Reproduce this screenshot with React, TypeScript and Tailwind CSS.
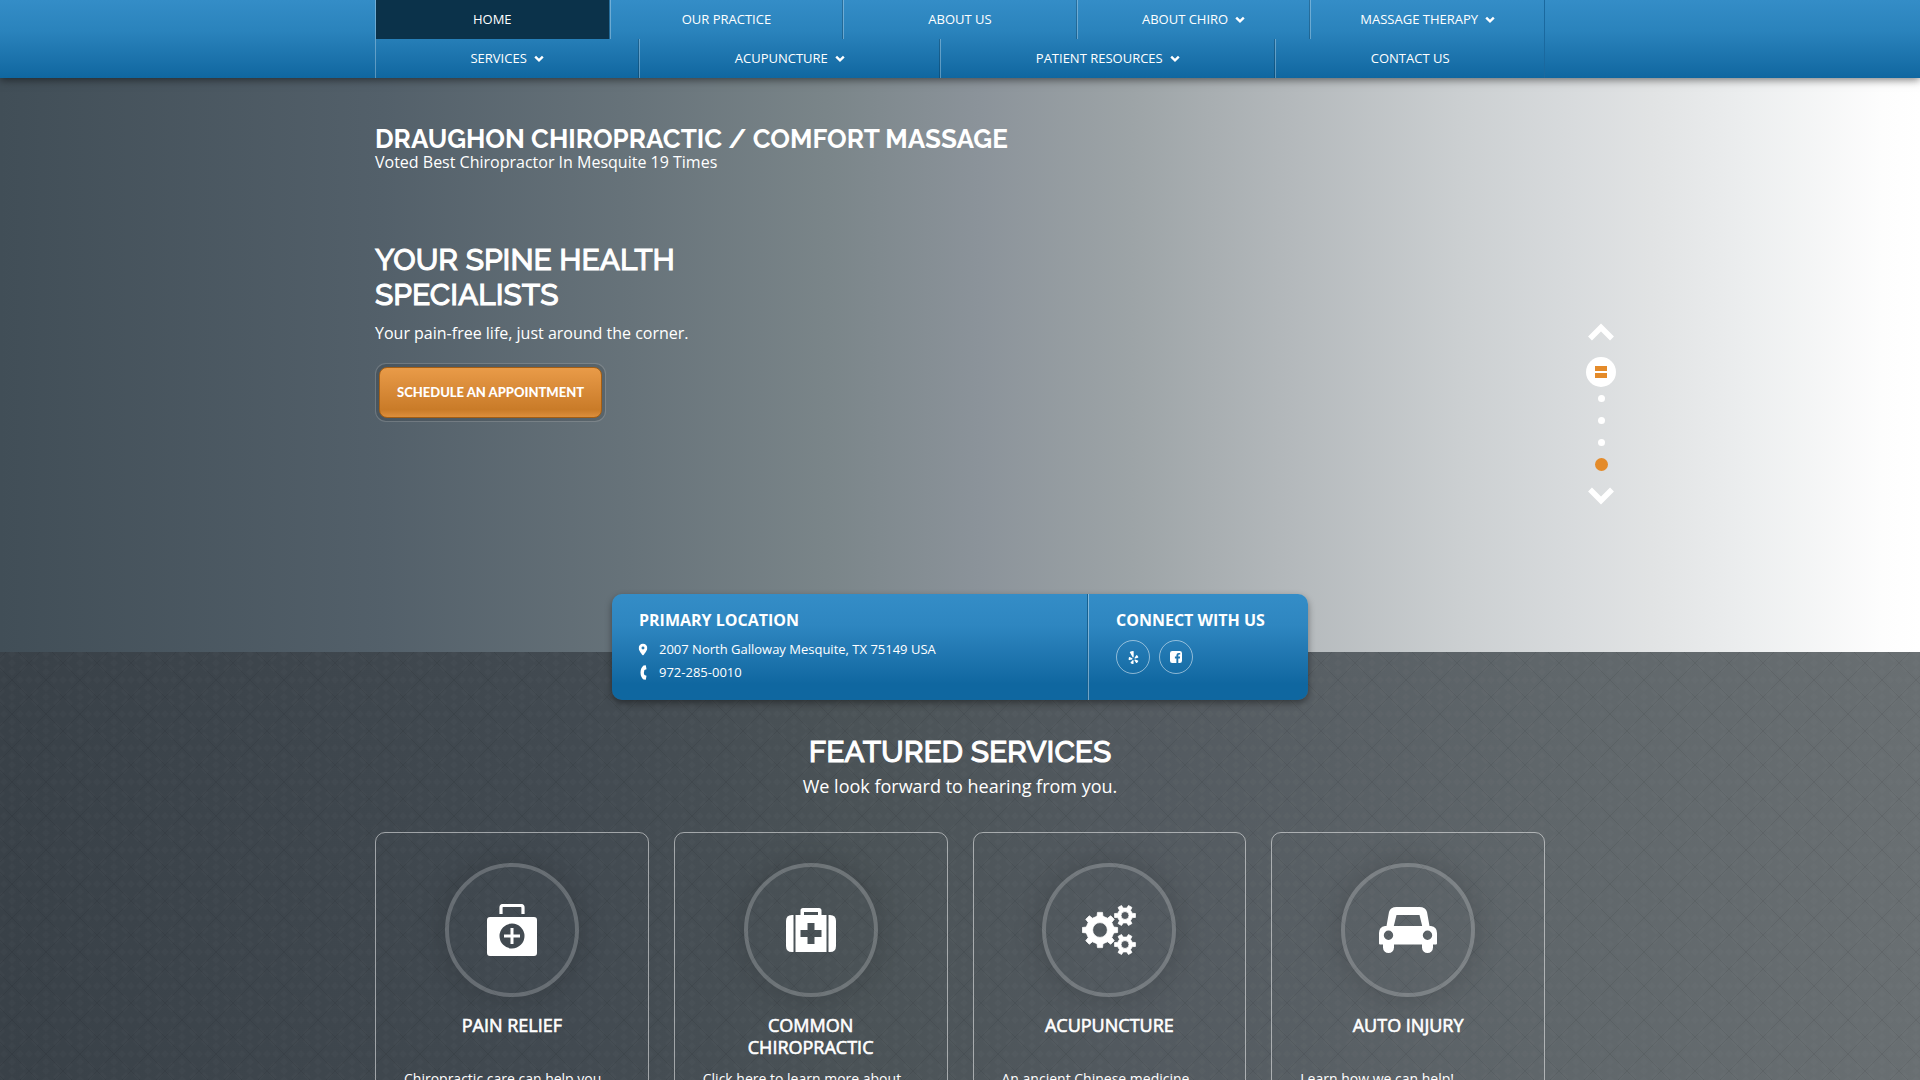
import React from "react";
import { FaLocationDot, FaYelp } from "react-icons/fa6";

const NAV = [
  { label: "HOME", wide: true, active: true },
  { label: "OUR PRACTICE", wide: true },
  { label: "ABOUT US", wide: true },
  { label: "ABOUT CHIRO", wide: true, menu: true },
  { label: "MASSAGE THERAPY", wide: true, menu: true },
  { label: "SERVICES", menu: true },
  { label: "ACUPUNCTURE", menu: true },
  { label: "PATIENT RESOURCES", menu: true },
  { label: "CONTACT US" },
];

function Caret() {
  return (
    <svg viewBox="0 0 10 8" className="ml-[7px] h-2 w-2.5" aria-hidden="true">
      <path d="M1.2 1.6 L5 5.4 L8.8 1.6" fill="none" stroke="white" strokeWidth="2.4" />
    </svg>
  );
}

function Handset() {
  return (
    <svg viewBox="0 0 8 15" className="h-[15px] w-2" aria-hidden="true">
      <path
        d="M4.500 0.500 L6.800 0.300 L7.500 4.200 L5.400 4.900 Q4.400 7.500 5.400 10.100 L7.500 10.800 L6.800 14.700 L4.500 14.500 Q1.500 12 1.500 7.500 Q1.500 3 4.500 0.500 Z"
        fill="white"
      />
    </svg>
  );
}

function FacebookSquare() {
  return (
    <svg viewBox="0 0 12 12" className="h-3 w-3" aria-hidden="true">
      <path
        d="M2.200 0 H9.800 Q12 0 12 2.200 V9.800 Q12 12 9.800 12 H8.300 V7.400 H9.900 L10.100 5.600 H8.300 V4.500 Q8.300 3.600 9.200 3.600 H10.200 V2 Q9.700 1.900 8.800 1.900 Q6.400 1.900 6.400 4.200 V5.600 H4.900 V7.400 H6.400 V12 H2.200 Q0 12 0 9.800 V2.200 Q0 0 2.200 0 Z"
        fill="white"
      />
    </svg>
  );
}

function MedicalBag() {
  return (
    <svg viewBox="0 0 50 52" className="h-[52px] w-[50px]" aria-hidden="true">
      <path d="M14 10 V3.5 Q14 1.5 16 1.5 H34 Q36 1.5 36 3.5 V10" fill="none" stroke="white" strokeWidth="3.2" />
      <path
        fillRule="evenodd"
        fill="white"
        d="M3 13 H47 Q50 13 50 16 V49 Q50 52 47 52 H3 Q0 52 0 49 V16 Q0 13 3 13 Z M25 19.5 A12.5 12.5 0 1 0 25 44.500 A12.5 12.5 0 1 0 25 19.500 Z"
      />
      <path d="M25 24 V40 M17 32 H33" stroke="white" strokeWidth="3" />
    </svg>
  );
}

function Medkit() {
  return (
    <svg viewBox="0 0 50 44" className="h-11 w-[50px]" aria-hidden="true">
      <path
        fillRule="evenodd"
        fill="white"
        d="M14.500 7 V2.500 Q14.500 0 17 0 H33 Q35.500 0 35.500 2.500 V7 H40.500 V44 H9.500 V7 Z M18 4 V7 H32 V4 Z M21.500 15 V22 H14.500 V29 H21.500 V36 H28.500 V29 H35.500 V22 H28.500 V15 Z"
      />
      <path d="M7.500 7 V44 H6 Q0 44 0 38 V13 Q0 7 6 7 Z M42.500 7 V44 H44 Q50 44 50 38 V13 Q50 7 44 7 Z" fill="white" />
    </svg>
  );
}

function gear(cx: number, cy: number, outer: number, inner: number, hole: number, teeth: number, turn: number) {
  const step = (Math.PI * 2) / teeth;
  const pts: string[] = [];
  for (let i = 0; i < teeth; i++) {
    const a = turn + i * step;
    [
      [inner, -0.27],
      [outer, -0.18],
      [outer, 0.18],
      [inner, 0.27],
    ].forEach(([r, f]) => {
      pts.push(`${(cx + r * Math.cos(a + f * step)).toFixed(2)} ${(cy + r * Math.sin(a + f * step)).toFixed(2)}`);
    });
  }
  return `M${pts.join("L")}Z M${cx - hole} ${cy}a${hole} ${hole} 0 1 0 ${hole * 2} 0a${hole} ${hole} 0 1 0 ${-hole * 2} 0Z`;
}

function Gears() {
  return (
    <svg viewBox="0 0 54 50" className="h-[50px] w-[54px]" aria-hidden="true">
      <g fill="white" fillRule="evenodd" stroke="white" strokeWidth="0.8" strokeLinejoin="round">
        <path d={gear(18, 25, 17.800, 14, 7.400, 8, 0)} />
        <path d={gear(43, 10.500, 10.600, 7.600, 4, 6, 0)} />
        <path d={gear(43, 39.500, 10.600, 7.600, 4, 6, 0)} />
      </g>
    </svg>
  );
}

function Car() {
  return (
    <svg viewBox="0 0 58 46" className="h-[46px] w-[58px]" aria-hidden="true">
      <path
        fillRule="evenodd"
        fill="white"
        d="M17.500 0 H40.500 Q46.500 0 48 5 L50.500 19 H52 Q58 20 58 26 V36.500 Q58 37.500 57 37.500 H54 V40.500 A5.500 5.500 0 0 1 43 40.500 V37.500 H15 V40.500 A5.500 5.500 0 0 1 4 40.500 V37.500 H1 Q0 37.500 0 36.500 V26 Q0 20 6 19 H7.500 L10 5 Q11.500 0 17.500 0 Z M17.500 8 L14.800 19 H43.200 L40.500 8 Z M9.500 23.500 A4.700 4.700 0 1 0 9.500 32.900 A4.700 4.700 0 1 0 9.500 23.500 Z M48.500 23.500 A4.700 4.700 0 1 0 48.500 32.900 A4.700 4.700 0 1 0 48.500 23.500 Z"
      />
    </svg>
  );
}

const SERVICES = [
  { title: "PAIN RELIEF", text: "Chiropractic care can help you", icon: <MedicalBag /> },
  { title: "COMMON CHIROPRACTIC", text: "Click here to learn more about", icon: <Medkit /> },
  { title: "ACUPUNCTURE", text: "An ancient Chinese medicine", icon: <Gears /> },
  { title: "AUTO INJURY", text: "Learn how we can help!", icon: <Car /> },
];

function Texture() {
  return (
    <svg className="absolute inset-0 h-full w-full" aria-hidden="true">
      <defs>
        <pattern id="weave" width="34" height="34" patternUnits="userSpaceOnUse" patternTransform="translate(-5 11)">
          <path d="M0 0 L34 34 M34 0 L0 34" stroke="black" strokeOpacity="0.07" />
          <g fill="white" fillOpacity="0.016">
            <path d="M17 5 l4 4 -4 4 -4 -4z M17 21 l4 4 -4 4 -4 -4z M5 17 l4 -4 4 4 -4 4z M21 17 l4 -4 4 4 -4 4z" />
            <path d="M5 1 l5 5 -3 3 -5 -5z M29 1 l-5 5 3 3 5 -5z M5 33 l5 -5 -3 -3 -5 5z M29 33 l-5 -5 3 -3 5 5z" />
            <path d="M0 13 l4 4 -4 4z M34 13 l-4 4 4 4z M13 0 l4 4 4 -4z M13 34 l4 -4 4 4z" />
          </g>
        </pattern>
      </defs>
      <rect width="100%" height="100%" fill="url(#weave)" />
    </svg>
  );
}

export default function App() {
  return (
    <div className="h-screen overflow-hidden bg-[#434c53] font-['Open_Sans',sans-serif] text-white">
      <header className="relative z-10 bg-linear-to-b from-[#348dc7] via-[#2a83bc] via-40% to-[#0f67a0] shadow-[0_2px_8px_rgba(0,0,0,0.5)]">
        <nav className="mx-auto max-w-[1170px] border-r border-l border-r-[#1a699f] border-l-white/30">
          <ul className="flex flex-wrap">
            {NAV.map((item, i) => (
              <li
                key={item.label}
                className={`h-[39px] grow ${item.wide ? "basis-1/5" : "basis-auto"} ${
                  i === 0 || i === 5 ? "" : "border-l border-l-white/30"
                } ${i === 4 || i === 8 ? "" : "border-r border-r-black/20"}`}
              >
                <a
                  href="#"
                  className={`flex h-full items-center justify-center text-[13px] ${item.active ? "bg-[#0b324a]" : ""}`}
                >
                  {item.label}
                  {item.menu && <Caret />}
                </a>
              </li>
            ))}
          </ul>
        </nav>
      </header>

      <section className="relative h-[574px] bg-[linear-gradient(90deg,#414e57_0%,#53606a_20%,#67737a_33%,#7a8589_43%,#8b939a_51%,#9da4a7_59%,#b3b8bb_67%,#cbcfd1_76%,#d8dbdd_82%,#e1e3e4_86%,#eceeef_91%,#fdfdfd_98%,#ffffff_100%)]">
        <div className="mx-auto max-w-[1170px] pt-[46px]">
          <h1 className="font-[Raleway,Lato,sans-serif] text-[26px] leading-[30px] font-bold">
            DRAUGHON CHIROPRACTIC / COMFORT MASSAGE
          </h1>
          <p className="text-base leading-4">Voted Best Chiropractor In Mesquite 19 Times</p>
          <h2 className="mt-[72px] w-[340px] font-[Raleway,Lato,sans-serif] text-[30px] leading-[35px] font-medium [-webkit-text-stroke:1px_white]">
            YOUR SPINE HEALTH SPECIALISTS
          </h2>
          <p className="mt-[9px] text-base leading-6">Your pain-free life, just around the corner.</p>
          <div className="mt-[18px] inline-block rounded-[11px] border border-white/20 bg-black/10 p-[3px]">
            <button className="block h-[51px] rounded-lg border border-[#a35e14] bg-linear-to-b from-[#e99b48] via-[#c97b28] via-85% to-[#dd8f3c] px-[17px] font-[Lato,sans-serif] text-[13px] font-black">
              SCHEDULE AN APPOINTMENT
            </button>
          </div>
        </div>

        <div className="absolute top-[245px] left-[calc(50%+626px)] flex w-[30px] flex-col items-center">
          <button aria-label="Previous slide">
            <svg viewBox="0 0 26 18" className="block h-[18px] w-[26px]">
              <path d="M2 15.500 L13 4.500 L24 15.500" fill="none" stroke="white" strokeWidth="5.500" />
            </svg>
          </button>
          <button
            aria-label="Pause"
            className="mt-4 flex h-[30px] w-[30px] flex-col items-center justify-center gap-0.5 rounded-full bg-white"
          >
            <span className="h-[5px] w-3 bg-[#e48b2a]" />
            <span className="h-[5px] w-3 bg-[#e48b2a]" />
          </button>
          <div className="mt-2 flex flex-col items-center gap-[15px]">
            <button aria-label="Slide 1" className="h-[7px] w-[7px] rounded-full bg-white" />
            <button aria-label="Slide 2" className="h-[7px] w-[7px] rounded-full bg-white" />
            <button aria-label="Slide 3" className="h-[7px] w-[7px] rounded-full bg-white" />
          </div>
          <button aria-label="Slide 4" className="mt-3 h-[13px] w-[13px] rounded-full bg-[#e48b2a]" />
          <button aria-label="Next slide" className="mt-4">
            <svg viewBox="0 0 26 18" className="block h-[18px] w-[26px]">
              <path d="M2 2.500 L13 13.500 L24 2.500" fill="none" stroke="white" strokeWidth="5.500" />
            </svg>
          </button>
        </div>
      </section>

      <section className="relative flex min-h-full flex-col items-center bg-[linear-gradient(90deg,#394148_0%,#424a51_30%,#4b5357_45%,#535a60_60%,#5f666a_80%,#696f72_100%)]">
        <Texture />
        <div className="relative -mt-[58px] flex rounded-[10px] bg-linear-to-b from-[#348dc7] via-[#2e86c0] via-30% to-[#0f67a0] to-85% shadow-[0_3px_7px_rgba(0,0,0,0.4)]">
          <address className="w-[476px] border-r border-[#17608f] px-[27px] pt-3.5 pb-4 text-[13px] not-italic">
            <h3 className="text-base leading-6 font-bold">PRIMARY LOCATION</h3>
            <div className="mt-1.5 flex items-center gap-3 leading-[23px]">
              <FaLocationDot className="h-[13px] w-2 scale-110" aria-hidden="true" />
              <a href="#">2007 North Galloway Mesquite, TX 75149 USA</a>
            </div>
            <div className="flex items-center gap-3 leading-[23px]">
              <Handset />
              <a href="tel:972-285-0010">972-285-0010</a>
            </div>
          </address>
          <div className="w-[220px] border-l border-white/40 pt-3.5 pl-[27px]">
            <h3 className="text-base leading-6 font-bold">CONNECT WITH US</h3>
            <div className="mt-2 flex gap-[9px]">
              <a
                href="#"
                aria-label="Yelp"
                className="flex h-[34px] w-[34px] items-center justify-center rounded-full border border-white/50"
              >
                <FaYelp className="h-[13px] w-[11px]" />
              </a>
              <a
                href="#"
                aria-label="Facebook"
                className="flex h-[34px] w-[34px] items-center justify-center rounded-full border border-white/50"
              >
                <FacebookSquare />
              </a>
            </div>
          </div>
        </div>

        <h2 className="relative mt-[34px] font-[Raleway,Lato,sans-serif] text-[30px] leading-9 font-medium [-webkit-text-stroke:1px_white]">
          FEATURED SERVICES
        </h2>
        <p className="relative mt-1 text-lg leading-6">We look forward to hearing from you.</p>

        <ul className="relative mt-[34px] grid w-full max-w-[1170px] grid-cols-4 gap-[25px]">
          {SERVICES.map((service) => (
            <li
              key={service.title}
              className="flex flex-col items-center rounded-[10px] border border-white/50 px-7 pt-[30px] pb-8"
            >
              <div className="flex h-[134px] w-[134px] items-center justify-center rounded-full border-4 border-white/20 shadow-[0_0_30px_rgba(0,0,0,0.18)]">
                {service.icon}
              </div>
              <h3 className="mt-[17px] min-h-11 w-40 text-center text-lg leading-[22px] [-webkit-text-stroke:0.6px_white]">
                {service.title}
              </h3>
              <p className="mt-[9px] w-full text-sm leading-6">{service.text}</p>
            </li>
          ))}
        </ul>
      </section>
    </div>
  );
}
